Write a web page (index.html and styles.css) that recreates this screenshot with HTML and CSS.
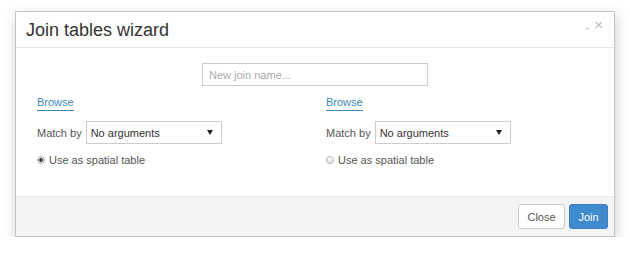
FILE: index.html
```html
<!DOCTYPE html>
<html lang="en">
<head>
    <meta charset="UTF-8">
    <meta name="viewport" content="width=device-width, initial-scale=1.0">
    <title>Join tables wizard</title>
    <link rel="stylesheet" href="styles.css">
</head>
<body>
    <div class="modal">
        <div class="modal-header">
            <h4 class="modal-title">Join tables wizard</h4>
            <div class="header-tools">
                <span class="tool-min">-</span>
                <span class="tool-close">&times;</span>
            </div>
        </div>

        <div class="modal-body">
            <div class="name-row">
                <input type="text" class="join-name" placeholder="New join name...">
            </div>
            <div class="columns">
                <div class="table-col">
                    <a href="#" class="browse">Browse</a>
                    <div class="match-row">
                        <label>Match by</label>
                        <div class="select">No arguments<span class="caret"></span></div>
                    </div>
                    <div class="radio-row">
                        <span class="radio checked"></span>
                        <span>Use as spatial table</span>
                    </div>
                </div>
                <div class="table-col">
                    <a href="#" class="browse">Browse</a>
                    <div class="match-row">
                        <label>Match by</label>
                        <div class="select">No arguments<span class="caret"></span></div>
                    </div>
                    <div class="radio-row">
                        <span class="radio"></span>
                        <span>Use as spatial table</span>
                    </div>
                </div>
            </div>
        </div>

        <div class="modal-footer">
            <button class="btn btn-default">Close</button>
            <button class="btn btn-primary">Join</button>
        </div>
    </div>
</body>
</html>
```

FILE: styles.css
```css
body {
    margin: 0;
    padding: 11px 0 0 15px;
    font-family: 'Liberation Sans', Arial, sans-serif;
    font-size: 11px;
    color: #555;
    background: #fff;
}
.modal {
    width: 598px;
    border: 1px solid #c4c4c4;
    background: #fff;
    box-shadow: 1px 4px 12px rgba(0, 0, 0, 0.2);
}
.modal-header {
    display: flex;
    justify-content: space-between;
    height: 35px;
    border-bottom: 1px solid #e8e8e8;
}
.modal-title {
    margin: 0;
    padding: 7px 0 0 10px;
    font-size: 18px;
    font-weight: normal;
    color: #333;
    line-height: 22px;
}
.header-tools {
    display: flex;
    gap: 5px;
    padding: 3px 11px 0 0;
    color: #bbb;
    font-size: 15px;
    line-height: 20px;
}
.tool-min {
    font-size: 13px;
    padding-top: 3px;
}
.modal-body {
    padding: 15px 0 0 21px;
    height: 133px;
}
.name-row {
    display: flex;
    justify-content: center;
    padding-right: 21px;
}
.join-name {
    width: 226px;
    height: 23px;
    box-sizing: border-box;
    border: 1px solid #ccc;
    padding: 0 6px;
    font-family: inherit;
    font-size: 11px;
    color: #555;
}
.join-name::placeholder {
    color: #aaa;
}
.columns {
    display: grid;
    grid-template-columns: 289px 1fr;
    margin-top: 10px;
}
.browse {
    display: inline-block;
    color: #3b87b4;
    text-decoration: none;
    border-bottom: 1px solid #3b87b4;
    line-height: 13px;
    padding-bottom: 1px;
}
.match-row {
    display: flex;
    align-items: center;
    gap: 4px;
    margin-top: 10px;
}
.select {
    display: flex;
    justify-content: space-between;
    align-items: center;
    width: 136px;
    height: 23px;
    box-sizing: border-box;
    border: 1px solid #ccc;
    padding: 0 8px 0 4px;
    color: #333;
}
.caret {
    width: 0;
    height: 0;
    border-left: 3px solid transparent;
    border-right: 3px solid transparent;
    border-top: 5px solid #222;
}
.radio-row {
    display: flex;
    align-items: center;
    gap: 4px;
    margin-top: 10px;
}
.radio {
    width: 6px;
    height: 6px;
    border: 1px solid #b5b5b5;
    border-radius: 50%;
    background: linear-gradient(#fdfdfd, #e4e4e4);
}
.radio.checked {
    background: radial-gradient(circle, #444 0 1.6px, #e8e8e8 2.2px);
}
.modal-footer {
    display: flex;
    justify-content: flex-end;
    gap: 4px;
    height: 40px;
    box-sizing: border-box;
    padding: 7px 6px 0 0;
    background: #f4f4f4;
    border-top: 1px solid #ebebeb;
}
.btn {
    height: 25px;
    padding: 0;
    border-radius: 3px;
    font-family: inherit;
    font-size: 11px;
    cursor: pointer;
}
.btn-default {
    width: 47px;
    background: #fff;
    border: 1px solid #ccc;
    color: #555;
}
.btn-primary {
    width: 39px;
    background: #3f8bcd;
    border: 1px solid #3a80bf;
    color: #fff;
}
```
